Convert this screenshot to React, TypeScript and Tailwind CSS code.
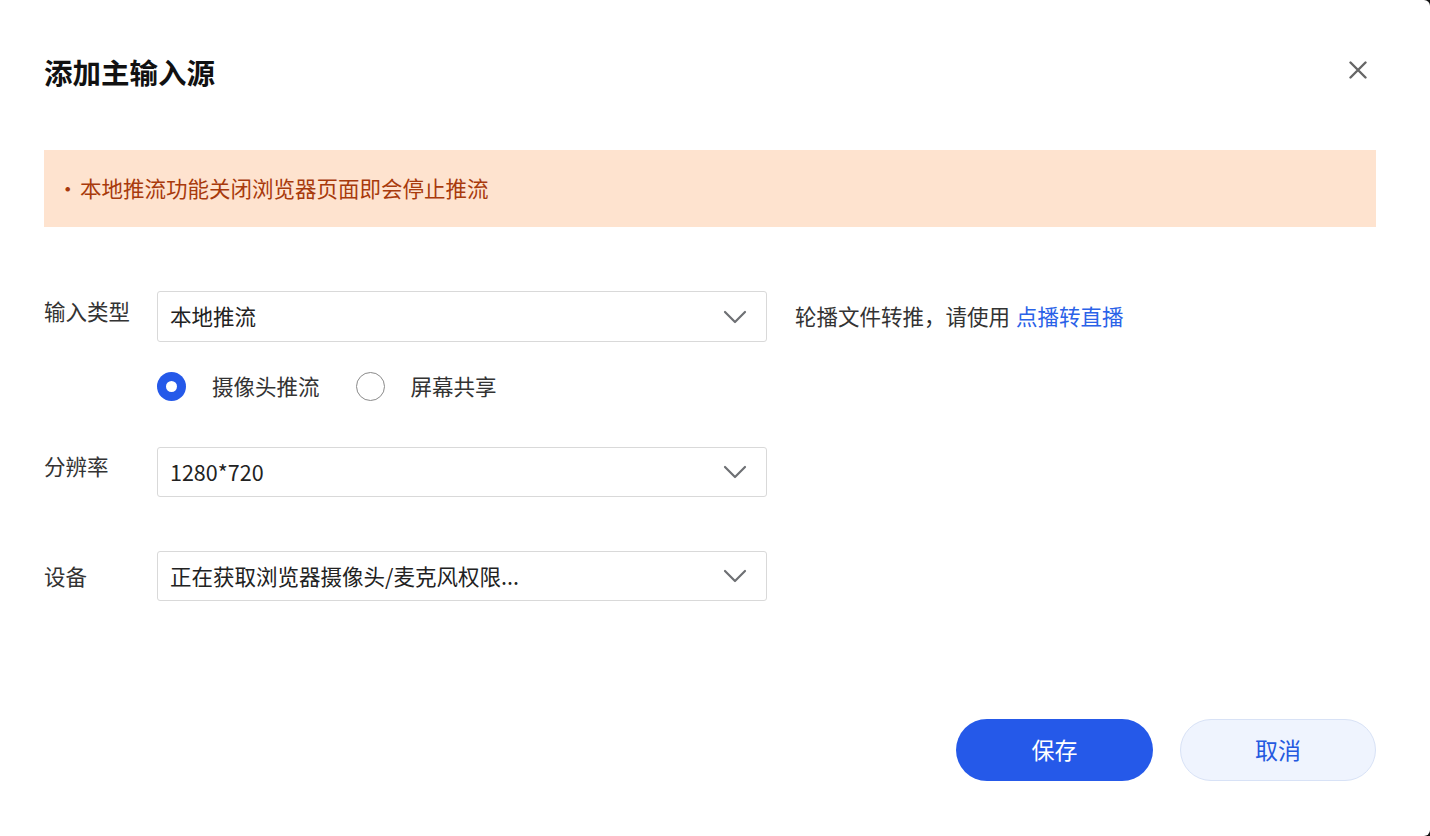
import { useState } from 'react';

const font = { fontFamily: '"Noto Sans CJK SC", "Noto Sans", sans-serif' };

function Chevron() {
  return (
    <svg width="24" height="14" viewBox="0 0 24 14" fill="none" className="shrink-0">
      <path d="M2 2l10 10L22 2" stroke="#6e7074" strokeWidth="2.2" strokeLinecap="round" strokeLinejoin="round" />
    </svg>
  );
}

function SelectBox({ value, tall }: { value: string; tall?: boolean }) {
  return (
    <div
      className={`w-[610px] ${tall ? 'h-[51px]' : 'h-[50px]'} flex items-center justify-between pl-[12px] pr-[19px] border border-[#d9d9d9] rounded-[3px] bg-white`}
    >
      <span className="text-[21.5px] text-[#222]">{value}</span>
      <Chevron />
    </div>
  );
}

function Radio({ checked, label, onClick }: { checked: boolean; label: string; onClick: () => void }) {
  return (
    <button onClick={onClick} className="h-[29px] flex items-center gap-[26px]">
      {checked ? (
        <span className="w-[29px] h-[29px] rounded-full bg-[#2559e9] flex items-center justify-center">
          <span className="w-[11px] h-[11px] rounded-full bg-white" />
        </span>
      ) : (
        <span className="w-[29px] h-[29px] rounded-full border border-[#8a8a8a] bg-white" />
      )}
      <span className="text-[21.5px] text-[#333] leading-[29px] -mt-[2px]">{label}</span>
    </button>
  );
}

export default function App() {
  const [source, setSource] = useState<'camera' | 'screen'>('camera');

  return (
    <div className="w-[1430px] h-[836px] bg-[#111]" style={font}>
      <div className="w-full h-full bg-white rounded-r-[6px] pl-[44px] pr-[54px] flex flex-col">
        {/* Header */}
        <div className="mt-[52px] h-[40px] flex items-center justify-between">
          <h1 className="text-[28.5px] font-semibold text-[#111] leading-none">添加主输入源</h1>
          <button className="mr-[9px] mb-[4px]" title="关闭">
            <svg width="18" height="18" viewBox="0 0 18 18" fill="none" className="block">
              <path d="M1.5 1.5l15 15M16.5 1.5l-15 15" stroke="#666" strokeWidth="2.4" strokeLinecap="round" />
            </svg>
          </button>
        </div>

        {/* Alert */}
        <div className="mt-[58px] h-[77px] bg-[#fee3cf] flex items-center pl-[13px]">
          <span className="text-[21.5px] text-[#a83a0c] w-[23px] shrink-0">·</span>
          <span className="text-[21.5px] text-[#a83a0c]">本地推流功能关闭浏览器页面即会停止推流</span>
        </div>

        {/* Form */}
        <div className="mt-[64px] flex flex-col">
          <div className="flex items-start">
            <label className="w-[113px] pt-[5px] text-[21.5px] text-[#333] leading-[30px]">输入类型</label>
            <SelectBox value="本地推流" tall />
            <div className="ml-[28px] h-[51px] flex items-center text-[21.5px] text-[#333]">
              轮播文件转推，请使用<a className="ml-[6px] text-[#2a62e8]" href="#">点播转直播</a>
            </div>
          </div>

          <div className="mt-[30px] ml-[113px] flex items-center gap-[36px]">
            <Radio checked={source === 'camera'} label="摄像头推流" onClick={() => setSource('camera')} />
            <Radio checked={source === 'screen'} label="屏幕共享" onClick={() => setSource('screen')} />
          </div>

          <div className="mt-[46px] flex items-start">
            <label className="w-[113px] pt-[4px] text-[21.5px] text-[#333] leading-[30px]">分辨率</label>
            <SelectBox value="1280*720" />
          </div>

          <div className="mt-[54px] flex items-start">
            <label className="w-[113px] pt-[10px] text-[21.5px] text-[#333] leading-[30px]">设备</label>
            <SelectBox value="正在获取浏览器摄像头/麦克风权限..." />
          </div>
        </div>

        {/* Footer */}
        <div className="mt-[118px] flex justify-end gap-[27px]">
          <button className="w-[197px] h-[62px] rounded-full bg-[#2559e9] text-white text-[23px] pb-[2px]">保存</button>
          <button className="w-[196px] h-[62px] rounded-full bg-[#eff4fe] border border-[#d8e2f6] text-[#2459e0] text-[23px] pb-[2px]">取消</button>
        </div>
      </div>
    </div>
  );
}
